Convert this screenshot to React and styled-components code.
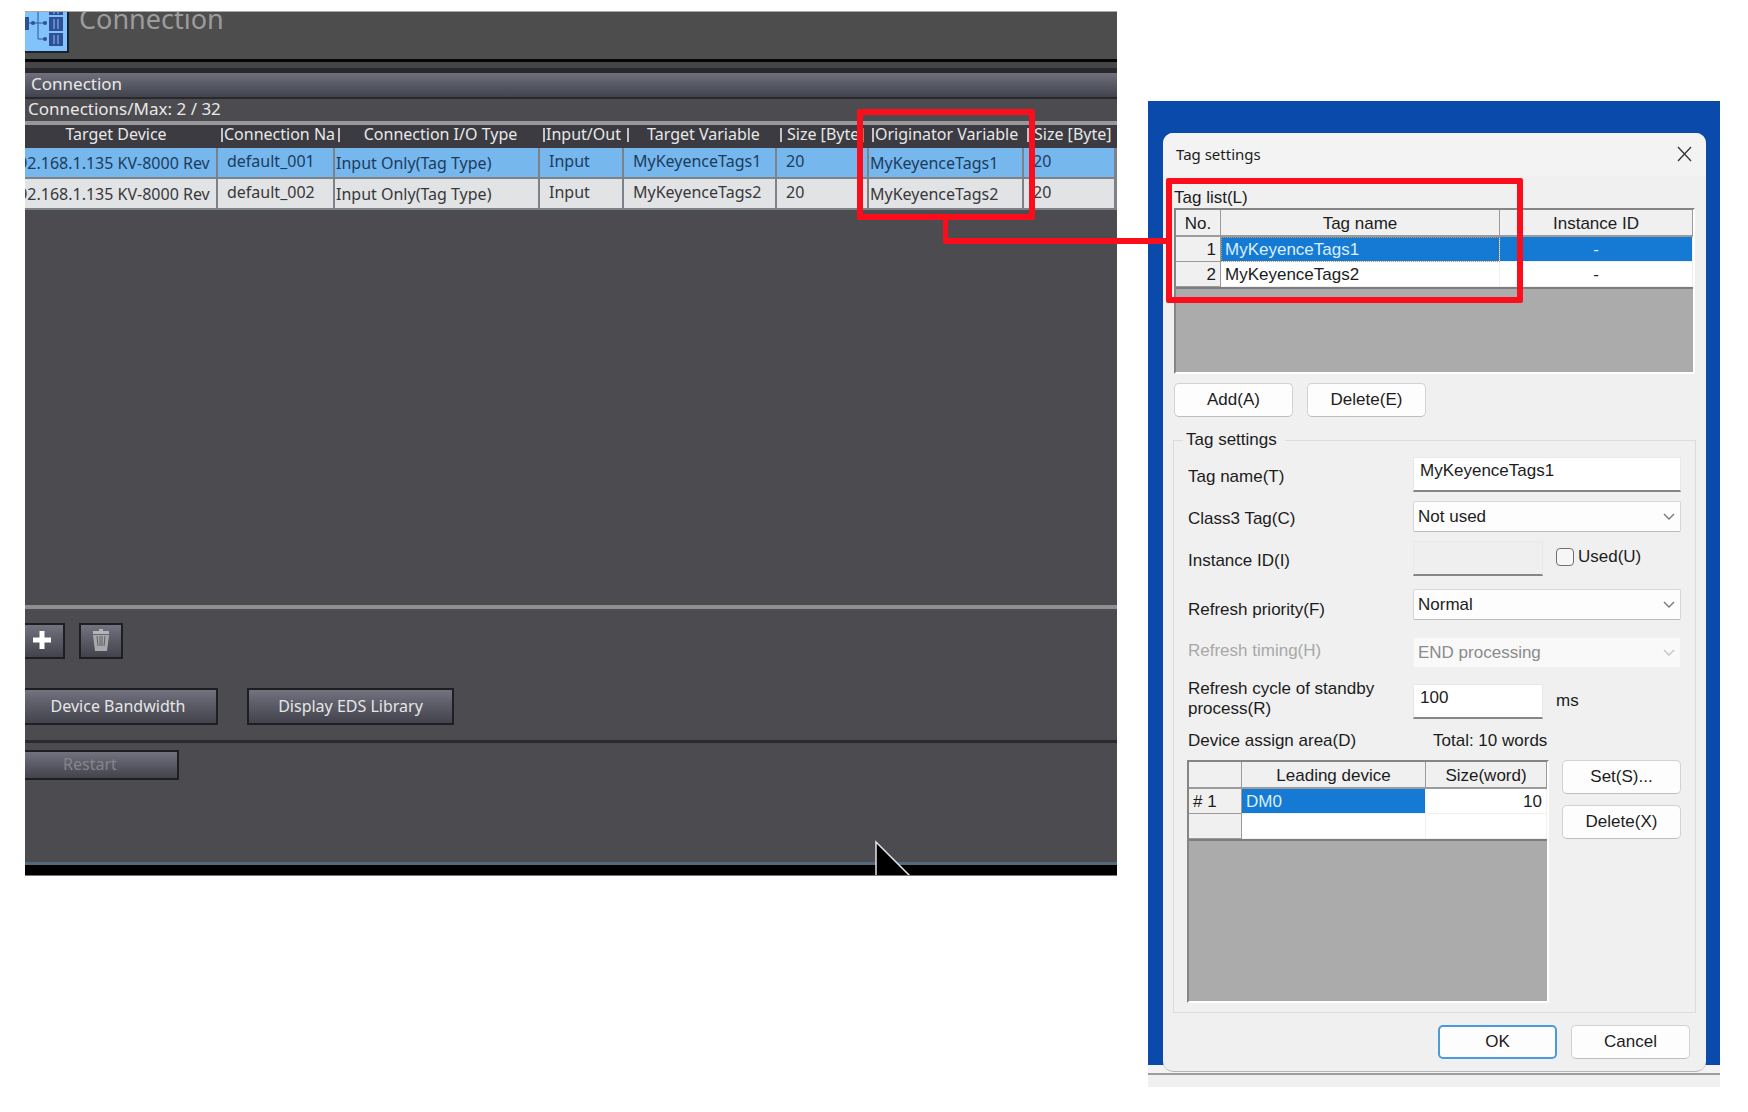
import React from 'react'
import styled, { createGlobalStyle } from 'styled-components'

const GlobalStyle = createGlobalStyle`
  * {
    box-sizing: border-box;
  }
  body {
    margin: 0;
    background: #fff;
  }
  button, input, select {
    font: inherit;
    color: inherit;
    margin: 0;
  }
`

const Page = styled.main`
  position: relative;
  display: flex;
  align-items: flex-start;
  gap: 31px;
  padding: 11px 28px 24px 25px;
`

/* ---------- connection panel (dark) ---------- */

const ConnectionPanel = styled.section`
  position: relative;
  flex: 1;
  min-width: 0;
  overflow: hidden;
  background: #4c4b4f;
  color: #e8e8e8;
  border-top: 1px solid #a9a9a9;
  border-bottom: 1px solid #777;
  font: 16px/20px "Noto Sans", "Open Sans", sans-serif;
`
const PanelHeader = styled.header`
  display: flex;
  gap: 10px;
  height: 47px;
  background: #4d4d4e;
`
const PanelTitle = styled.h1`
  margin: 0;
  margin-top: -10px;
  font-size: 27px;
  line-height: 34px;
  font-weight: 400;
  color: #9c9c9c;
`
const HeaderRule = styled.div`
  height: 14px;
  background: #46454a;
  border-top: 3px solid #060606;
  border-bottom: 5px solid #29292c;
`
const SectionBar = styled.h2`
  margin: 0;
  padding-left: 6px;
  height: 26px;
  font-size: 17px;
  line-height: 22px;
  font-weight: 400;
  background: linear-gradient(#6f707c, #5c5d69 40%, #41434d);
  border-bottom: 2px solid #29292c;
`
const ConnectionCount = styled.p`
  margin: 0;
  padding-left: 3px;
  height: 22px;
  font-size: 17px;
  line-height: 20px;
`
const ConnectionArea = styled.div`
  min-height: 488px;
  border-top: 4px solid #98989a;
  border-bottom: 4px solid #8f8f90;
`
const ConnectionTable = styled.table`
  width: 100%;
  table-layout: fixed;
  border-collapse: separate;
  border-spacing: 0;
`
const HeadCell = styled.th`
  height: 23px;
  padding: 0 ${props => props.$cut || 0}px 0 3px;
  overflow: hidden;
  white-space: nowrap;
  font-weight: 400;
  line-height: 18px;
  vertical-align: top;
  background: #3b3b41;

  span {
    display: block;
    height: 23px;
    padding-left: ${props => props.$indent || 3}px;
    overflow: hidden;
    text-align: ${props => (props.$left ? 'left' : 'center')};
    background: ${props => (props.$bar ? 'linear-gradient(#c4c4c6, #c4c4c6) 0 3px / 2px 14px no-repeat' : 'none')};
  }
`
const ConnectionRow = styled.tr`
  background: ${props => (props.$selected ? '#76b7ee' : '#e2e3e5')};
  color: ${props => (props.$selected ? '#1d3c5c' : '#38383a')};
`
const Cell = styled.td`
  height: 31px;
  padding: ${props => (props.$flush ? '0 0 0 1px' : '0 0 4px 9px')};
  text-indent: ${props => (props.$cut ? '-17px' : '0')};
  overflow: hidden;
  white-space: nowrap;
  border-right: 2px solid #7c8288;
  border-bottom: 2px solid #7c8288;
`
const ButtonRow = styled.div`
  display: flex;
  gap: ${props => props.$gap}px;
  padding: ${props => props.$pad};
`
const DarkButton = styled.button`
  display: flex;
  align-items: center;
  justify-content: center;
  width: ${props => props.$width}px;
  height: ${props => props.$height}px;
  padding: 0 ${props => props.$shift || 0}px 2px 0;
  border: 2px solid #1f1f22;
  ${props => props.$cut && 'border-left: 0;'}
  background: linear-gradient(#72737e, #5b5c67 45%, #42434c);
  color: ${props => (props.disabled ? '#85858c' : '#e6e6e6')};
`
const PanelFooter = styled.footer`
  min-height: 122px;
  padding-top: 7px;
  border-top: 3px solid #2b2b2d;
`
const PanelEdge = styled.div`
  height: 13px;
  background: #000;
  border-top: 3px solid #54697c;
`
const Cursor = styled.svg`
  position: absolute;
  left: 849px;
  bottom: -1px;
`

/* ---------- desktop with the tag settings dialog ---------- */

const Desktop = styled.section`
  flex: 0 0 572px;
  margin-top: 90px;
  padding: 32px 14px 15px 15px;
  background: linear-gradient(
    #0a4aaa calc(100% - 22px),
    #f3f3f3 calc(100% - 22px),
    #f3f3f3 calc(100% - 14px),
    #9d9d9d calc(100% - 14px),
    #9d9d9d calc(100% - 12px),
    #f0f0f0 calc(100% - 12px)
  );
  color: #1c1c1c;
  font: 17px/20px "Liberation Sans", Arial, sans-serif;
`
const Dialog = styled.div`
  padding: 0 10px 12px;
  background: #f0f0f0;
  border-bottom: 1px solid #b5b5b5;
  border-radius: 10px;
`
const TitleBar = styled.div`
  display: flex;
  align-items: center;
  justify-content: space-between;
  height: 43px;
  margin: 0 -10px;
  padding: 0 13px 2px;
  background: #f3f3f3;
  border-radius: 10px 10px 0 0;
  font: 15px/20px "Noto Sans", "Open Sans", sans-serif;
`
const CloseButton = styled.button`
  display: flex;
  padding: 0;
  border: 0;
  background: none;
`
const TagList = styled.div`
  padding: 12px 1px 0;
`
const ListBox = styled.div`
  min-height: ${props => props.$height}px;
  flex: 1;
  background: #ababab;
  border: 2px solid #fff;
  border-top-color: #858585;
  border-left-color: #858585;
`
const ListTable = styled.table`
  width: 100%;
  table-layout: fixed;
  border-collapse: separate;
  border-spacing: 0;
  border-bottom: 2px solid #7d7d7d;

  th, td {
    height: 25px;
    padding: 1px 4px 0;
    line-height: 20px;
    font-weight: 400;
    white-space: nowrap;
  }
  thead th, tbody th {
    background: #f0f0f0;
    border-right: 1px solid #9b9b9b;
    border-bottom: 1px solid #9b9b9b;
  }
  thead th {
    height: 27px;
    padding-top: 2px;
    border-bottom-width: 2px;
  }
  td {
    background: #fff;
    border-right: 1px solid #f0f0f0;
    border-bottom: 1px solid #f0f0f0;
  }
`
const RowHead = styled.th`
  text-align: ${props => props.$align || 'right'};
`
const ListCell = styled.td`
  text-align: ${props => props.$align || 'left'};
  ${props => props.$selected && `
    && {
      background: #147ad4;
      color: #dceeff;
    }
  `}
  ${props => props.$focused && `
    outline: 1px dotted #d09a5c;
    outline-offset: -1px;
  `}
`
const Button = styled.button`
  width: 119px;
  height: 34px;
  padding: 0 0 1px;
  background: #fdfdfd;
  border: ${props => (props.$primary ? '2px solid #4a9bdc' : '1px solid #d2d2d2')};
  border-bottom-color: ${props => (props.$primary ? '#4a9bdc' : '#bdbdbd')};
  border-radius: 5px;
`
const Actions = styled.div`
  display: flex;
  justify-content: ${props => (props.$end ? 'flex-end' : 'flex-start')};
  gap: 14px;
  padding: ${props => (props.$end ? '12px 6px 0' : '9px 1px 0')};
`
const Group = styled.fieldset`
  min-width: 0;
  margin: 14px 0 0;
  padding: 8px 14px 9px 13px;
  border: 1px solid #dcdcdc;
`
const Legend = styled.legend`
  margin-left: -4px;
  padding: 0 8px 0 3px;
  line-height: 18px;
`
const Field = styled.div`
  display: grid;
  grid-template-columns: 226px 1fr;
  align-items: ${props => (props.$low ? 'end' : 'center')};
  margin-top: ${props => props.$gap || 0}px;
`
const Label = styled.label`
  padding: ${props => (props.$plain ? '0 24px 4px 1px' : '4px 24px 0 1px')};
  line-height: 20px;
  color: ${props => (props.$disabled ? '#a8a8a8' : 'inherit')};
`
const Controls = styled.div`
  display: flex;
  align-items: center;
  gap: 13px;
`
const TextBox = styled.input`
  width: ${props => (props.$short ? '130px' : '100%')};
  height: 35px;
  padding: 0 6px 6px;
  background: ${props => (props.disabled ? '#efefef' : '#fff')};
  border: 1px solid #e8e8e8;
  border-bottom: 2px solid #868686;
`
const SelectWrap = styled.div`
  position: relative;
  width: 100%;
  color: ${props => (props.$disabled ? '#8b8b8b' : 'inherit')};

  svg {
    position: absolute;
    right: 6px;
    top: 12px;
    opacity: ${props => (props.$disabled ? 0.4 : 1)};
    pointer-events: none;
  }
`
const Select = styled.select`
  display: block;
  width: 100%;
  height: 31px;
  padding: 0 28px 0 4px;
  appearance: none;
  opacity: 1;
  background: ${props => (props.disabled ? '#f9f9f9' : '#fdfdfd')};
  border: 1px solid ${props => (props.disabled ? '#f1f1f1' : '#d6d6d6')};
  border-bottom-color: ${props => (props.disabled ? '#f1f1f1' : '#bcbcbc')};
  border-radius: 2px;
`
const CheckLabel = styled.label`
  display: flex;
  align-items: center;
  gap: 4px;
  height: 35px;
  padding-bottom: 3px;
`
const CheckBox = styled.input`
  appearance: none;
  width: 18px;
  height: 18px;
  background: #f6f6f6;
  border: 1px solid #707070;
  border-radius: 4px;
`
const AreaHead = styled.div`
  display: flex;
  margin-top: 8px;
  padding-left: 1px;

  span:first-child {
    flex: 0 0 245px;
  }
`
const AreaBody = styled.div`
  display: flex;
  gap: 13px;
  margin-top: 9px;
`
const SideButtons = styled.div`
  display: flex;
  flex-direction: column;
  gap: 11px;
`

/* ---------- red call-outs over both windows ---------- */

const CallOut = styled.div`
  position: absolute;
  border: 6px solid #fc0d1b;
  border-radius: 2px;
  pointer-events: none;
`
const VariableBox = styled(CallOut)`
  left: 857px;
  top: 109px;
  width: 178px;
  height: 111px;
`
const TagListBox = styled(CallOut)`
  right: 225px;
  top: 178px;
  width: 357px;
  height: 125px;
`
const Connector = styled(CallOut)`
  left: 943px;
  right: 580px;
  top: 218px;
  height: 26px;
  border-width: 0 0 6px 5px;
`

const columns = [
  { title: 'Target Device', width: 193, cut: 17 },
  { title: 'Connection Name', width: 117, bar: true, left: true },
  { title: 'Connection I/O Type', width: 205, bar: true },
  { title: 'Input/Out', width: 84, bar: true, left: true },
  { title: 'Target Variable', width: 153, bar: true },
  { title: 'Size [Byte]', width: 92, bar: true, left: true, indent: 7 },
  { title: 'Originator Variable', width: 155, bar: true, left: true },
  { title: 'Size [Byte]', width: 92, bar: true, left: true, indent: 7 },
  { title: '' },
]

const connections = [
  { name: 'default_001', tag: 'MyKeyenceTags1' },
  { name: 'default_002', tag: 'MyKeyenceTags2' },
]

const ConnectionIcon = () => (
  <svg width="44" height="41" viewBox="0 0 44 41" aria-hidden="true">
    <rect width="44" height="41" fill="#17222e" />
    <rect width="42" height="39" fill="#83c3fb" />
    <g fill="#2f4f96">
      <path d="M0 5h4v13H0zM24 0h14v3H24zM24 5h14v14H24zM24 21h14v13H24z" />
      <circle cx="8" cy="11" r="2" />
      <circle cx="20" cy="11" r="2" />
      <circle cx="20" cy="27" r="2" />
    </g>
    <path d="M4 11h17M13 0v27h7" fill="none" stroke="#2f5694" />
    <path d="M29 0v2M33 0v2M29 7v10M33 7v10M29 23v9M33 23v9" stroke="#8fc6f5" />
  </svg>
)

const PlusIcon = () => (
  <svg width="18" height="18" viewBox="0 0 18 18" aria-hidden="true">
    <path d="M9 0v18M0 9h18" stroke="#fff" strokeWidth="5" />
  </svg>
)

const TrashIcon = () => (
  <svg width="18" height="24" viewBox="0 0 18 24" aria-hidden="true">
    <path d="M7 1h4v2H7zM1 3h16v3H1z" fill="#b4b4b8" />
    <path d="M1 7h16l-2 16H3z" fill="#a9a9ad" />
    <path d="M5 8l1 10M8 8v10M10 8v10M13 8l-1 10" stroke="#5b5c64" />
  </svg>
)

const Chevron = () => (
  <svg width="12" height="8" viewBox="0 0 12 8" aria-hidden="true">
    <path d="M1 1l5 5 5-5" fill="none" stroke="#777" strokeWidth="1.4" />
  </svg>
)

const DropDown = ({ id, value, disabled }) => (
  <SelectWrap $disabled={disabled}>
    <Select id={id} defaultValue={value} disabled={disabled}>
      <option>{value}</option>
    </Select>
    <Chevron />
  </SelectWrap>
)

const ConnectionView = () => (
  <ConnectionPanel>
    <PanelHeader>
      <ConnectionIcon />
      <PanelTitle>Connection</PanelTitle>
    </PanelHeader>
    <HeaderRule />
    <SectionBar>Connection</SectionBar>
    <ConnectionCount>Connections/Max: 2 / 32</ConnectionCount>
    <ConnectionArea>
      <ConnectionTable>
        <colgroup>
          {columns.map((col, i) => <col key={i} width={col.width} />)}
        </colgroup>
        <thead>
          <tr>
            {columns.map((col, i) => (
              <HeadCell
                key={i}
                $bar={col.bar}
                $left={col.left}
                $cut={col.cut}
                $indent={col.indent}
                scope="col"
              >
                <span>{col.title}</span>
              </HeadCell>
            ))}
          </tr>
        </thead>
        <tbody>
          {connections.map((row, i) => (
            <ConnectionRow key={row.name} $selected={i === 0}>
              <Cell $flush $cut>192.168.1.135 KV-8000 Rev</Cell>
              <Cell>{row.name}</Cell>
              <Cell $flush>Input Only(Tag Type)</Cell>
              <Cell>Input</Cell>
              <Cell>{row.tag}</Cell>
              <Cell>20</Cell>
              <Cell $flush>{row.tag}</Cell>
              <Cell>20</Cell>
              <Cell />
            </ConnectionRow>
          ))}
        </tbody>
      </ConnectionTable>
    </ConnectionArea>
    <ButtonRow $gap={14} $pad="14px 0 0">
      <DarkButton $width={40} $height={36} $shift={5} $cut aria-label="Add"><PlusIcon /></DarkButton>
      <DarkButton $width={44} $height={36} aria-label="Delete"><TrashIcon /></DarkButton>
    </ButtonRow>
    <ButtonRow $gap={29} $pad="29px 0 15px">
      <DarkButton $width={193} $height={37} $shift={5} $cut>Device Bandwidth</DarkButton>
      <DarkButton $width={207} $height={37}>Display EDS Library</DarkButton>
    </ButtonRow>
    <PanelFooter>
      <DarkButton $width={154} $height={30} $shift={22} $cut disabled>Restart</DarkButton>
    </PanelFooter>
    <PanelEdge />
    <Cursor width="38" height="36" viewBox="0 0 38 36" aria-hidden="true">
      <path d="M2 37V2l35 35" fill="#000" stroke="#e4e4e4" strokeWidth="1.5" />
    </Cursor>
  </ConnectionPanel>
)

const TagSettings = () => (
  <Dialog role="dialog" aria-label="Tag settings">
    <TitleBar>
      <span>Tag settings</span>
      <CloseButton aria-label="Close">
        <svg width="17" height="16" viewBox="0 0 17 16" aria-hidden="true">
          <path d="M2 1l13 14M15 1L2 15" stroke="#333" strokeWidth="1.3" />
        </svg>
      </CloseButton>
    </TitleBar>

    <TagList>
      <div id="tag-list">Tag list(L)</div>
      <ListBox $height={166}>
        <ListTable aria-labelledby="tag-list">
          <colgroup>
            <col width="45" />
            <col />
            <col width="193" />
          </colgroup>
          <thead>
            <tr>
              <th scope="col">No.</th>
              <th scope="col">Tag name</th>
              <th scope="col">Instance ID</th>
            </tr>
          </thead>
          <tbody>
            {connections.map((row, i) => (
              <tr key={row.tag}>
                <RowHead scope="row">{i + 1}</RowHead>
                <ListCell $selected={i === 0} $focused={i === 0}>{row.tag}</ListCell>
                <ListCell $selected={i === 0} $align="center">-</ListCell>
              </tr>
            ))}
          </tbody>
        </ListTable>
      </ListBox>
    </TagList>
    <Actions>
      <Button>Add(A)</Button>
      <Button>Delete(E)</Button>
    </Actions>

    <Group>
      <Legend>Tag settings</Legend>
      <Field>
        <Label htmlFor="tag-name">Tag name(T)</Label>
        <TextBox id="tag-name" defaultValue="MyKeyenceTags1" />
      </Field>
      <Field $gap={9}>
        <Label htmlFor="class3">Class3 Tag(C)</Label>
        <DropDown id="class3" value="Not used" />
      </Field>
      <Field $gap={9}>
        <Label htmlFor="instance-id">Instance ID(I)</Label>
        <Controls>
          <TextBox id="instance-id" $short disabled />
          <CheckLabel><CheckBox type="checkbox" />Used(U)</CheckLabel>
        </Controls>
      </Field>
      <Field $gap={13} $low>
        <Label htmlFor="priority">Refresh priority(F)</Label>
        <DropDown id="priority" value="Normal" />
      </Field>
      <Field $gap={17}>
        <Label htmlFor="timing" $plain $disabled>Refresh timing(H)</Label>
        <DropDown id="timing" value="END processing" disabled />
      </Field>
      <Field $gap={11}>
        <Label htmlFor="cycle" $plain>Refresh cycle of standby process(R)</Label>
        <Controls>
          <TextBox id="cycle" $short defaultValue="100" />
          <span>ms</span>
        </Controls>
      </Field>
      <AreaHead>
        <span id="assign-area">Device assign area(D)</span>
        <span>Total: 10 words</span>
      </AreaHead>
      <AreaBody>
        <ListBox $height={243}>
          <ListTable aria-labelledby="assign-area">
            <colgroup>
              <col width="53" />
              <col />
              <col width="121" />
            </colgroup>
            <thead>
              <tr>
                <th />
                <th scope="col">Leading device</th>
                <th scope="col">Size(word)</th>
              </tr>
            </thead>
            <tbody>
              <tr>
                <RowHead scope="row" $align="left"># 1</RowHead>
                <ListCell $selected>DM0</ListCell>
                <ListCell $align="right">10</ListCell>
              </tr>
              <tr>
                <RowHead />
                <ListCell />
                <ListCell />
              </tr>
            </tbody>
          </ListTable>
        </ListBox>
        <SideButtons>
          <Button>Set(S)...</Button>
          <Button>Delete(X)</Button>
        </SideButtons>
      </AreaBody>
    </Group>

    <Actions $end>
      <Button $primary>OK</Button>
      <Button>Cancel</Button>
    </Actions>
  </Dialog>
)

const App = () => (
  <Page>
    <GlobalStyle />
    <ConnectionView />
    <Desktop>
      <TagSettings />
    </Desktop>
    <Connector />
    <VariableBox />
    <TagListBox />
  </Page>
)

export default App
